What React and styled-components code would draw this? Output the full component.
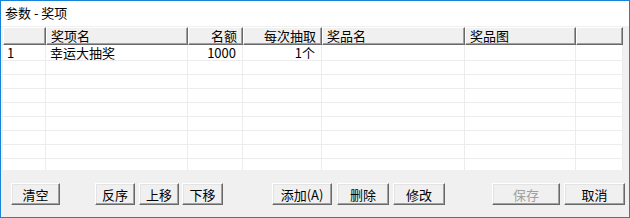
import React from "react";
import styled, { createGlobalStyle } from "styled-components";

const Global = createGlobalStyle`
  html, body {
    margin: 0;
    padding: 0;
    background: #ffffff;
  }
  * {
    box-sizing: border-box;
  }
`;

const columns = [
  { key: "no", title: "", width: 43, align: "left" },
  { key: "name", title: "奖项名", width: 142, align: "left" },
  { key: "quota", title: "名额", width: 55, align: "right" },
  { key: "each", title: "每次抽取", width: 79, align: "right" },
  { key: "prize", title: "奖品名", width: 143, align: "left" },
  { key: "image", title: "奖品图", width: 111, align: "left" },
  { key: "rest", title: "", width: 47, align: "left" },
];

const rows = [
  { no: "1", name: "幸运大抽奖", quota: "1000", each: "1个" },
  {}, {}, {}, {}, {}, {}, {}, {},
];

const buttons = [
  { label: "清空", width: 49, gap: 0 },
  { label: "反序", width: 40, gap: 35 },
  { label: "上移", width: 40, gap: 4 },
  { label: "下移", width: 41, gap: 3 },
  { label: "添加(A)", width: 60, gap: 49 },
  { label: "删除", width: 52, gap: 5 },
  { label: "修改", width: 52, gap: 4 },
  { label: "保存", width: 68, gap: 47, disabled: true },
  { label: "取消", width: 61, gap: 4 },
];

const App = () => {
  const template = columns.map((c) => `${c.width}px`).join(" ");
  return (
    <>
      <Global />
      <Window>
        <TitleBar>参数 - 奖项</TitleBar>
        <Body>
          <Grid $cols={template}>
            {columns.map((c) => (
              <HeadCell key={c.key} $align={c.align}>
                {c.title}
              </HeadCell>
            ))}
            {rows.map((r, i) =>
              columns.map((c) => (
                <Cell
                  key={`${i}-${c.key}`}
                  $align={c.align}
                  $h={i === 0 ? 16 : i === rows.length - 1 ? 11 : 14}
                  $last={i === rows.length - 1}
                >
                  {r[c.key] || ""}
                </Cell>
              ))
            )}
          </Grid>
          <ButtonBar>
            {buttons.map((b) => (
              <Button
                key={b.label}
                $w={b.width}
                $gap={b.gap}
                disabled={b.disabled}
              >
                {b.label}
              </Button>
            ))}
          </ButtonBar>
        </Body>
      </Window>
    </>
  );
};

const Window = styled.div`
  width: 630px;
  height: 218px;
  border: 1px solid #1883d7;
  background: #f0f0f0;
  display: flex;
  flex-direction: column;
  font-family: "Noto Sans CJK SC", "Liberation Sans", sans-serif;
  font-size: 13px;
  color: #000;
  overflow: hidden;
`;

const TitleBar = styled.div`
  height: 25px;
  background: #ffffff;
  padding: 4px 0 0 4px;
  line-height: 16px;
  font-size: 13px;
`;

const Body = styled.div`
  flex: 1;
  display: flex;
  flex-direction: column;
  padding: 1px 0 0 2px;
`;

const Grid = styled.div`
  width: 620px;
  display: grid;
  grid-template-columns: ${(p) => p.$cols};
  background: #ffffff;
`;

const HeadCell = styled.div`
  height: 18px;
  display: flex;
  align-items: center;
  justify-content: ${(p) => (p.$align === "right" ? "flex-end" : "flex-start")};
  background: #f0f0f0;
  border-top: 1px solid #ffffff;
  border-left: 1px solid #ffffff;
  border-right: 1px solid #696969;
  border-bottom: 1px solid #696969;
  box-shadow: inset -1px -1px 0 #a0a0a0;
  padding: 0 5px 1px 4px;
  line-height: 1;
  white-space: nowrap;
`;

const Cell = styled.div`
  height: ${(p) => p.$h}px;
  display: flex;
  align-items: center;
  justify-content: ${(p) => (p.$align === "right" ? "flex-end" : "flex-start")};
  background: #ffffff;
  border-right: 1px solid #ececec;
  border-bottom: ${(p) => (p.$last ? "none" : "1px solid #ececec")};
  padding: 0 6px 0 4px;
  line-height: 1;
  white-space: nowrap;
`;

const ButtonBar = styled.div`
  display: flex;
  align-items: center;
  margin-top: 13px;
  padding-left: 8px;
`;

const Button = styled.button`
  width: ${(p) => p.$w}px;
  height: 22px;
  margin-left: ${(p) => p.$gap}px;
  padding: 0;
  background: #f0f0f0;
  border: none;
  border-top: 1px solid #ffffff;
  border-left: 1px solid #ffffff;
  border-right: 1px solid #696969;
  border-bottom: 1px solid #696969;
  box-shadow: inset -1px -1px 0 #a0a0a0, inset 1px 1px 0 #e3e3e3;
  font-family: "Noto Sans CJK SC", "Liberation Sans", sans-serif;
  font-size: 13px;
  line-height: 1;
  color: #000;
  &:disabled {
    color: #a0a0a0;
  }
`;

export default App;
